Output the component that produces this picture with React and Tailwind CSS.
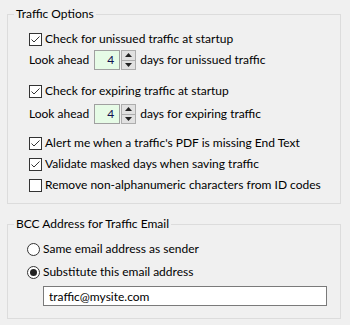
import React, { useState } from 'react';

const font = { fontFamily: 'Lato, "Segoe UI", sans-serif' };

const CheckBox = ({ checked, onChange, label }) => (
  <label className="flex items-center h-[20px] cursor-default select-none whitespace-nowrap">
    <span
      onClick={onChange}
      className="w-[13px] h-[13px] border border-[#333333] bg-white flex items-center justify-center shrink-0"
    >
      {checked && (
        <svg width="11" height="11" viewBox="0 0 11 11">
          <polyline points="1.5,5.5 4,8 9.5,2.5" fill="none" stroke="#333333" strokeWidth="1" />
        </svg>
      )}
    </span>
    <span className="ml-[3px]">{label}</span>
  </label>
);

const Radio = ({ checked, onChange, label }) => (
  <label className="flex items-center h-[20px] cursor-default select-none whitespace-nowrap" onClick={onChange}>
    <span className="w-[13px] h-[13px] rounded-full border border-[#333333] bg-white flex items-center justify-center shrink-0">
      {checked && <span className="w-[7px] h-[7px] rounded-full bg-[#222222]" />}
    </span>
    <span className="ml-[3px]">{label}</span>
  </label>
);

const Spinner = ({ value, setValue }) => (
  <div className="flex items-center">
    <div className="w-[26px] h-[20px] border border-[#a0a0a0] bg-[#e6fbe6] flex items-center justify-end pr-[5px] text-[#101050]">
      {value}
    </div>
    <div className="ml-[1px] w-[15px] h-[20px] border border-[#adadad] bg-[#e1e1e1] flex flex-col">
      <button onClick={() => setValue(value + 1)} className="flex-1 flex items-center justify-center border-b border-[#adadad]">
        <svg width="7" height="4" viewBox="0 0 7 4"><polygon points="0,4 7,4 3.5,0" fill="#222" /></svg>
      </button>
      <button onClick={() => setValue(Math.max(0, value - 1))} className="flex-1 flex items-center justify-center">
        <svg width="7" height="4" viewBox="0 0 7 4"><polygon points="0,0 7,0 3.5,4" fill="#222" /></svg>
      </button>
    </div>
  </div>
);

const App = () => {
  const [unissued, setUnissued] = useState(true);
  const [expiring, setExpiring] = useState(true);
  const [alertPdf, setAlertPdf] = useState(true);
  const [validate, setValidate] = useState(true);
  const [removeNonAlpha, setRemoveNonAlpha] = useState(false);
  const [daysUnissued, setDaysUnissued] = useState(4);
  const [daysExpiring, setDaysExpiring] = useState(4);
  const [bcc, setBcc] = useState('substitute');
  const [email, setEmail] = useState('traffic@mysite.com');

  return (
    <div className="w-[350px] h-[325px] bg-[#f0f0f0] text-[12px] leading-[14px] text-black pl-[7px] pt-[7px]" style={font}>
      <fieldset className="w-[334px] border border-[#dcdcdc] px-0">
        <legend className="ml-[6px] px-[2px]">Traffic Options</legend>
        <div className="pl-[21px] pt-[8px] pb-[8px]">
          <CheckBox checked={unissued} onChange={() => setUnissued(!unissued)} label="Check for unissued traffic at startup" />
          <div className="flex items-center h-[20px] mt-[1px] whitespace-nowrap">
            <span className="mr-[5px]">Look ahead</span>
            <Spinner value={daysUnissued} setValue={setDaysUnissued} />
            <span className="ml-[4px]">days for unissued traffic</span>
          </div>
          <div className="mt-[11px]">
            <CheckBox checked={expiring} onChange={() => setExpiring(!expiring)} label="Check for expiring traffic at startup" />
          </div>
          <div className="flex items-center h-[20px] mt-[3px] whitespace-nowrap">
            <span className="mr-[5px]">Look ahead</span>
            <Spinner value={daysExpiring} setValue={setDaysExpiring} />
            <span className="ml-[4px]">days for expiring traffic</span>
          </div>
          <div className="mt-[9px] flex flex-col gap-[1px]">
            <CheckBox checked={alertPdf} onChange={() => setAlertPdf(!alertPdf)} label="Alert me when a traffic's PDF is missing End Text" />
            <CheckBox checked={validate} onChange={() => setValidate(!validate)} label="Validate masked days when saving traffic" />
            <CheckBox checked={removeNonAlpha} onChange={() => setRemoveNonAlpha(!removeNonAlpha)} label="Remove non-alphanumeric characters from ID codes" />
          </div>
        </div>
      </fieldset>

      <fieldset className="w-[334px] border border-[#dcdcdc] px-0 mt-[13px]">
        <legend className="ml-[6px] px-[2px]">BCC Address for Traffic Email</legend>
        <div className="pl-[19px] pt-[8px] pb-[12px]">
          <Radio checked={bcc === 'same'} onChange={() => setBcc('same')} label="Same email address as sender" />
          <div className="mt-[3px]">
            <Radio checked={bcc === 'substitute'} onChange={() => setBcc('substitute')} label="Substitute this email address" />
          </div>
          <input
            value={email}
            onChange={e => setEmail(e.target.value)}
            className="mt-[4px] ml-[16px] w-[284px] h-[20px] border border-[#7a7a7a] bg-white px-[5px] outline-none"
          />
        </div>
      </fieldset>
    </div>
  );
};

export default App;
